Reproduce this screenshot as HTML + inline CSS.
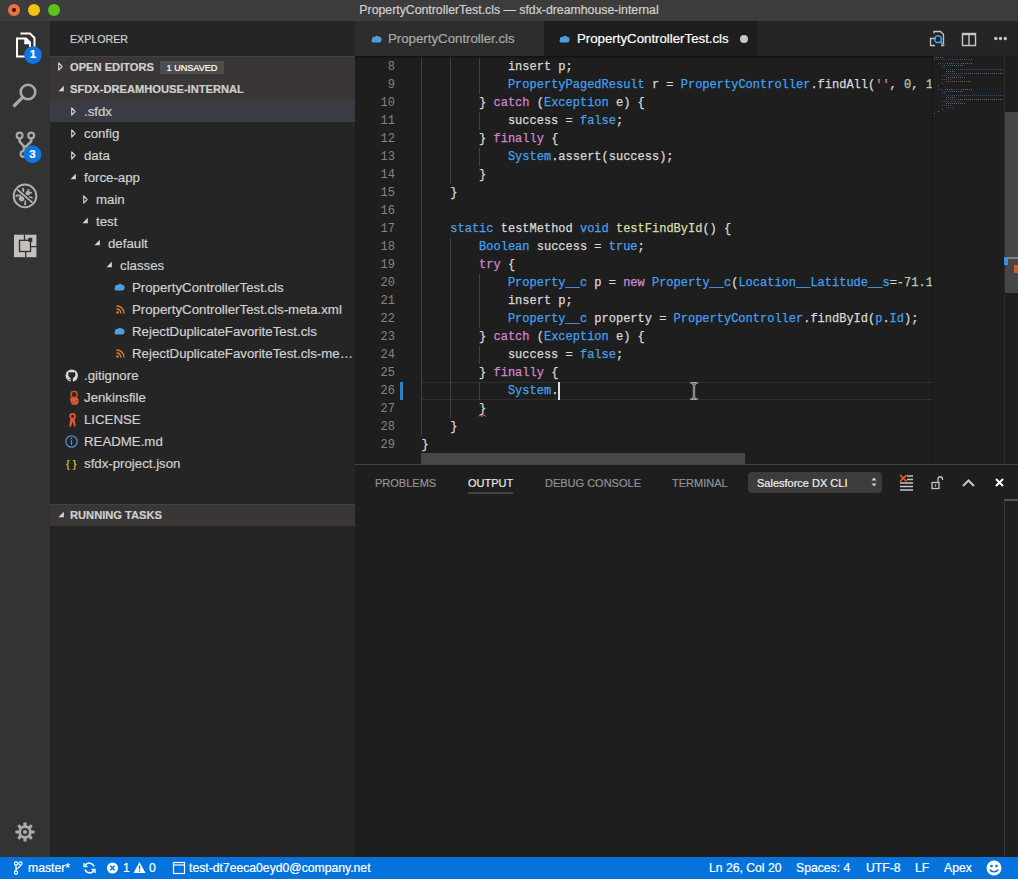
<!DOCTYPE html><html><head><meta charset="utf-8"><style>
*{margin:0;padding:0;box-sizing:border-box}
html,body{width:1018px;height:879px;overflow:hidden;background:#1e1e1e;font-family:"Liberation Sans",sans-serif}
div,svg{position:absolute}
.t{white-space:nowrap;-webkit-text-stroke:0.2px currentColor}
.code{font-family:"Liberation Mono",monospace;font-size:12px;line-height:18px;white-space:pre;color:#d8d8d8;height:18px}
.ln{font-family:"Liberation Mono",monospace;font-size:12px;line-height:18px;color:#858585;text-align:right;width:40px;height:18px}
.code{-webkit-text-stroke:0.25px currentColor}
.k{color:#4f9ee8}.c{color:#42a0f2}.p{color:#d086d0}.f{color:#dcdcaa}.s{color:#ce9178}.n{color:#b5cea8}
.row{left:0;width:305px;height:22px;line-height:24px;font-size:13.25px;color:#d0d0d0;white-space:nowrap}
.row .t{position:absolute;top:0}
.sec{left:0;width:305px;height:22px;line-height:23px;font-size:11.15px;font-weight:bold;color:#d0d0d0;background:#3a3636;white-space:nowrap}
.sec .t{position:absolute;top:0;left:20px}
</style></head><body>
<div style="left:0;top:0;width:1018px;height:21px;background:#3c3c3c"></div>
<div style="left:8px;top:4px;width:12px;height:12px;border-radius:50%;background:#e9733f"></div>
<div style="left:28px;top:4px;width:12px;height:12px;border-radius:50%;background:#f3c414"></div>
<div style="left:48px;top:4px;width:12px;height:12px;border-radius:50%;background:#5cc418"></div>
<div style="left:12px;top:8px;width:4px;height:4px;border-radius:50%;background:#3a0f0a"></div>
<div class="t" style="left:0;top:0;width:1018px;height:21px;line-height:21px;text-align:center;font-size:12.3px;color:#d0d0d0">PropertyControllerTest.cls — sfdx-dreamhouse-internal</div>
<div style="left:0;top:21px;width:50px;height:836px;background:#333333"></div>

<svg style="left:0;top:21px" width="50" height="260" viewBox="0 0 50 260">
 <!-- files icon -->
 <path d="M20.5 12.5 H30 L34.5 17 V29" fill="none" stroke="#ffffff" stroke-width="2"/>
 <path d="M17 17.5 H26 L30 21.5 V35.5 H17 Z" fill="none" stroke="#ffffff" stroke-width="2"/>
 <path d="M25 17.5 V22.5 H30" fill="#ffffff" stroke="#ffffff" stroke-width="1.5"/>
 <circle cx="33" cy="34" r="8.9" fill="#0d76e0"/>
 <!-- search -->
 <circle cx="28" cy="71" r="7.3" fill="none" stroke="#a8a8a8" stroke-width="2.6"/>
 <path d="M22.5 76.5 L14.5 84.5" stroke="#a8a8a8" stroke-width="3.2" stroke-linecap="round"/>
 <!-- git -->
 <circle cx="19.6" cy="114.5" r="2.9" fill="none" stroke="#a8a8a8" stroke-width="2.2"/>
 <circle cx="31.2" cy="114.5" r="2.9" fill="none" stroke="#a8a8a8" stroke-width="2.2"/>
 <circle cx="23.5" cy="133" r="2.9" fill="none" stroke="#a8a8a8" stroke-width="2.2"/>
 <path d="M19.6 117.5 V120.5 L24 125.5 V130 M31.2 117.5 V120.5 L25 126.5" fill="none" stroke="#a8a8a8" stroke-width="2.6"/>
 <circle cx="32.5" cy="133.2" r="8.9" fill="#0d76e0"/>
 <!-- debug -->
 <circle cx="25" cy="174.9" r="11.3" fill="none" stroke="#b4b0ac" stroke-width="2"/>
 <circle cx="21.6" cy="177.6" r="2.8" fill="#b4b0ac"/>
 <circle cx="27.8" cy="172.3" r="2.3" fill="#b4b0ac"/>
 <path d="M23.3 167.3 V171.5 M22.1 167.6 H23.3 M28.9 168.2 L27.3 171.6 M27.5 171.6 H31.9 M29 175.8 L32.7 177 M16.3 174.4 H21 M16.3 174.4 V176 M25.3 179.4 V183.3 H24" stroke="#b4b0ac" stroke-width="1.6" fill="none"/>
 <path d="M17.1 168.2 L32.4 181.6" stroke="#333333" stroke-width="3.6"/>
 <path d="M17.1 168.2 L32.4 181.6" stroke="#b4b0ac" stroke-width="1.8"/>
 <!-- extensions -->
 <rect x="14" y="213.7" width="22.4" height="22.5" fill="#c4c0bc"/>
 <path d="M24.5 213.7 V219.3 M30.5 225.6 H36.4 M25.7 230.5 V236.2" stroke="#333333" stroke-width="1.3"/>
 <rect x="19.5" y="219.3" width="11" height="11.2" fill="#c4c0bc" stroke="#2e2e2e" stroke-width="1.3"/>
 <rect x="28.3" y="216.8" width="4" height="4" fill="#2e2e2e"/>
</svg>
<div class="t" style="left:28px;top:47px;width:10px;text-align:center;font-size:11.5px;font-weight:bold;line-height:14px;color:#fff">1</div>
<div class="t" style="left:27.5px;top:147px;width:10px;text-align:center;font-size:11.5px;font-weight:bold;line-height:14px;color:#fff">3</div>
<svg style="left:14px;top:821px" width="22" height="22" viewBox="0 0 22 22"><g transform="translate(11 11)"><rect x="-1.6" y="-9.6" width="3.2" height="4.5" rx="0.8" fill="#aaaaaa" transform="rotate(0)"/><rect x="-1.6" y="-9.6" width="3.2" height="4.5" rx="0.8" fill="#aaaaaa" transform="rotate(45)"/><rect x="-1.6" y="-9.6" width="3.2" height="4.5" rx="0.8" fill="#aaaaaa" transform="rotate(90)"/><rect x="-1.6" y="-9.6" width="3.2" height="4.5" rx="0.8" fill="#aaaaaa" transform="rotate(135)"/><rect x="-1.6" y="-9.6" width="3.2" height="4.5" rx="0.8" fill="#aaaaaa" transform="rotate(180)"/><rect x="-1.6" y="-9.6" width="3.2" height="4.5" rx="0.8" fill="#aaaaaa" transform="rotate(225)"/><rect x="-1.6" y="-9.6" width="3.2" height="4.5" rx="0.8" fill="#aaaaaa" transform="rotate(270)"/><rect x="-1.6" y="-9.6" width="3.2" height="4.5" rx="0.8" fill="#aaaaaa" transform="rotate(315)"/><circle r="6.8" fill="#aaaaaa"/><circle r="3" fill="none" stroke="#333333" stroke-width="1.8"/></g></svg>
<div style="left:50px;top:21px;width:305px;height:836px;background:#252526;overflow:hidden">
<div class="t" style="left:20px;top:0;height:35px;line-height:36px;font-size:10.65px;color:#d0d0d0">EXPLORER</div>
<div class="sec" style="top:35px"><span class="t">OPEN EDITORS</span>
<svg style="left:7.7px;top:6px" width="6" height="9" viewBox="0 0 6 9"><path d="M0.7 0.9 L4.1 4.5 L0.7 8.1 Z" fill="none" stroke="#d8d8d8" stroke-width="1.1" stroke-linejoin="round"/></svg>
</div>
<div style="left:0;top:35px;width:305px;height:1px;background:#434141"></div>
<div style="left:110px;top:40px;width:64px;height:13px;background:#4d4d4d"></div>
<div class="t" style="left:110px;top:40px;width:64px;height:13px;line-height:14px;text-align:center;font-size:9.1px;color:#ffffff">1 UNSAVED</div>
<div class="sec" style="top:57px"><span class="t">SFDX-DREAMHOUSE-INTERNAL</span>
<svg style="left:7.7px;top:7px" width="7" height="7" viewBox="0 0 7 7"><path d="M0.5 6.2 L5.8 6.2 L5.8 0.8 Z" fill="#d8d8d8"/></svg>
</div>
<div class="row" style="top:79px;background:#393c44;"><span class="t" style="left:34px">.sfdx</span>
<svg style="left:21px;top:7px" width="6" height="9" viewBox="0 0 6 9"><path d="M0.7 0.9 L4.1 4.5 L0.7 8.1 Z" fill="none" stroke="#d8d8d8" stroke-width="1.1" stroke-linejoin="round"/></svg>
</div>
<div class="row" style="top:101px;"><span class="t" style="left:34px">config</span>
<svg style="left:21px;top:7px" width="6" height="9" viewBox="0 0 6 9"><path d="M0.7 0.9 L4.1 4.5 L0.7 8.1 Z" fill="none" stroke="#d8d8d8" stroke-width="1.1" stroke-linejoin="round"/></svg>
</div>
<div class="row" style="top:123px;"><span class="t" style="left:34px">data</span>
<svg style="left:21px;top:7px" width="6" height="9" viewBox="0 0 6 9"><path d="M0.7 0.9 L4.1 4.5 L0.7 8.1 Z" fill="none" stroke="#d8d8d8" stroke-width="1.1" stroke-linejoin="round"/></svg>
</div>
<div class="row" style="top:145px;"><span class="t" style="left:34px">force-app</span>
<svg style="left:20px;top:7px" width="7" height="7" viewBox="0 0 7 7"><path d="M0.5 6.2 L5.8 6.2 L5.8 0.8 Z" fill="#d8d8d8"/></svg>
</div>
<div class="row" style="top:167px;"><span class="t" style="left:46px">main</span>
<svg style="left:33px;top:7px" width="6" height="9" viewBox="0 0 6 9"><path d="M0.7 0.9 L4.1 4.5 L0.7 8.1 Z" fill="none" stroke="#d8d8d8" stroke-width="1.1" stroke-linejoin="round"/></svg>
</div>
<div class="row" style="top:189px;"><span class="t" style="left:46px">test</span>
<svg style="left:32px;top:7px" width="7" height="7" viewBox="0 0 7 7"><path d="M0.5 6.2 L5.8 6.2 L5.8 0.8 Z" fill="#d8d8d8"/></svg>
</div>
<div class="row" style="top:211px;"><span class="t" style="left:58px">default</span>
<svg style="left:44px;top:7px" width="7" height="7" viewBox="0 0 7 7"><path d="M0.5 6.2 L5.8 6.2 L5.8 0.8 Z" fill="#d8d8d8"/></svg>
</div>
<div class="row" style="top:233px;"><span class="t" style="left:70px">classes</span>
<svg style="left:56px;top:7px" width="7" height="7" viewBox="0 0 7 7"><path d="M0.5 6.2 L5.8 6.2 L5.8 0.8 Z" fill="#d8d8d8"/></svg>
</div>
<div class="row" style="top:255px;"><span class="t" style="left:82px">PropertyControllerTest.cls</span>
<svg style="left:64px;top:7px" width="11" height="8" viewBox="0 0 11 8"><path d="M2.5 7.5 C0.5 7.5 0 5.5 1 4.5 C0.8 2.5 2.6 1.3 4 2 C4.8 0.5 7.2 0.3 8 1.8 C9.8 1.8 11 3.5 10.5 5.2 C10.3 6.8 9 7.6 7.8 7.5 Z" fill="#4a9fe0"/></svg>
</div>
<div class="row" style="top:277px;"><span class="t" style="left:82px">PropertyControllerTest.cls-meta.xml</span>
<svg style="left:66px;top:7px" width="9" height="9" viewBox="0 0 9 9"><circle cx="1.5" cy="7.5" r="1.3" fill="#e37933"/><path d="M0.5 4 A4 4 0 0 1 4.8 8.5 M0.5 1 A7.2 7.2 0 0 1 8 8.5" fill="none" stroke="#e37933" stroke-width="1.4"/></svg>
</div>
<div class="row" style="top:299px;"><span class="t" style="left:82px">RejectDuplicateFavoriteTest.cls</span>
<svg style="left:64px;top:7px" width="11" height="8" viewBox="0 0 11 8"><path d="M2.5 7.5 C0.5 7.5 0 5.5 1 4.5 C0.8 2.5 2.6 1.3 4 2 C4.8 0.5 7.2 0.3 8 1.8 C9.8 1.8 11 3.5 10.5 5.2 C10.3 6.8 9 7.6 7.8 7.5 Z" fill="#4a9fe0"/></svg>
</div>
<div class="row" style="top:321px;"><span class="t" style="left:82px">RejectDuplicateFavoriteTest.cls-me…</span>
<svg style="left:66px;top:7px" width="9" height="9" viewBox="0 0 9 9"><circle cx="1.5" cy="7.5" r="1.3" fill="#e37933"/><path d="M0.5 4 A4 4 0 0 1 4.8 8.5 M0.5 1 A7.2 7.2 0 0 1 8 8.5" fill="none" stroke="#e37933" stroke-width="1.4"/></svg>
</div>
<div class="row" style="top:343px;"><span class="t" style="left:34px">.gitignore</span>
<svg style="left:15px;top:5px" width="14" height="14" viewBox="0 0 14 14"><circle cx="6.8" cy="6.6" r="6.2" fill="#dadada"/><path d="M3.4 4.3 L3.5 2.9 L5 3.5 C6 3.2 7.5 3.2 8.5 3.5 L10 2.9 L10.1 4.3 C10.5 5.1 10.5 6.1 10.1 7.1 C9.6 8.3 8.7 8.8 7.9 9 V13 H5.7 V9 C4.9 8.8 4 8.3 3.5 7.1 C3.1 6.1 3.1 5.1 3.4 4.3 Z" fill="#252526"/><path d="M3 9.6 C4 10.8 4.6 10.9 5.7 10.6" stroke="#252526" stroke-width="0.8" fill="none"/></svg>
</div>
<div class="row" style="top:365px;"><span class="t" style="left:34px">Jenkinsfile</span>
<svg style="left:18px;top:4px" width="12" height="16" viewBox="0 0 12 16"><rect x="3.3" y="1.6" width="5.6" height="6" rx="2" fill="none" stroke="#d8502c" stroke-width="1.5"/><path d="M2.2 8 C4 7.2 8 7.2 10 8.2 C11 9.5 10.8 12.5 9.8 14 C8.8 15 5 15.2 3.8 14.3 C2.8 13 2 10 2.2 8 Z" fill="#e0562f"/><path d="M5 11.5 L6 13 M8 10 L9 11.5" stroke="#7a2a18" stroke-width="0.9"/></svg>
</div>
<div class="row" style="top:387px;"><span class="t" style="left:34px">LICENSE</span>
<svg style="left:18px;top:4px" width="10" height="17" viewBox="0 0 10 17"><circle cx="4.6" cy="4.3" r="2.4" fill="none" stroke="#e0562f" stroke-width="1.8"/><path d="M2.4 6.8 L1 14.2 L2.9 14.8 L4.6 9.5 L6.1 14.8 L7.8 14.2 L6.6 6.8 Z" fill="#e0562f"/></svg>
</div>
<div class="row" style="top:409px;"><span class="t" style="left:34px">README.md</span>
<svg style="left:15px;top:5px" width="13" height="13" viewBox="0 0 13 13"><circle cx="6.5" cy="6.5" r="5.7" fill="none" stroke="#4a94d0" stroke-width="1.2"/><rect x="5.9" y="5.2" width="1.2" height="4.8" fill="#4a94d0"/><circle cx="6.5" cy="3.4" r="0.8" fill="#4a94d0"/></svg>
</div>
<div class="row" style="top:431px;"><span class="t" style="left:34px">sfdx-project.json</span>
<div class="t" style="left:16px;top:5px;font-size:11px;line-height:14px;color:#d7c630;letter-spacing:0px">{ }</div>
</div>
<div class="sec" style="top:483px"><span class="t">RUNNING TASKS</span>
<svg style="left:7.7px;top:7px" width="7" height="7" viewBox="0 0 7 7"><path d="M0.5 6.2 L5.8 6.2 L5.8 0.8 Z" fill="#d8d8d8"/></svg>
</div>
<div style="left:0;top:483px;width:305px;height:1px;background:#434141"></div>
</div>
<div style="left:355px;top:21px;width:663px;height:35px;background:#252526"></div>
<div style="left:355px;top:21px;width:189px;height:35px;background:#2d2d2d"></div>
<div style="left:544px;top:21px;width:214px;height:35px;background:#1e1e1e"></div>
<svg style="position:absolute;left:370.5px;top:34.5px" width="11" height="8" viewBox="0 0 11 8"><path d="M2.5 7.5 C0.5 7.5 0 5.5 1 4.5 C0.8 2.5 2.6 1.3 4 2 C4.8 0.5 7.2 0.3 8 1.8 C9.8 1.8 11 3.5 10.5 5.2 C10.3 6.8 9 7.6 7.8 7.5 Z" fill="#4a9fe0"/></svg>
<svg style="left:559px;top:34.5px" width="11" height="8" viewBox="0 0 11 8"><path d="M2.5 7.5 C0.5 7.5 0 5.5 1 4.5 C0.8 2.5 2.6 1.3 4 2 C4.8 0.5 7.2 0.3 8 1.8 C9.8 1.8 11 3.5 10.5 5.2 C10.3 6.8 9 7.6 7.8 7.5 Z" fill="#4a9fe0"/></svg>
<div class="t" style="left:388px;top:21px;height:35px;line-height:36px;font-size:13.25px;color:#a9a9a9">PropertyController.cls</div>
<div class="t" style="left:577px;top:21px;height:35px;line-height:36px;font-size:13.25px;color:#ffffff">PropertyControllerTest.cls</div>
<div style="left:740px;top:35px;width:8px;height:8px;border-radius:50%;background:#c8c8c8"></div>
<svg style="left:925px;top:28px" width="90" height="22" viewBox="0 0 90 22">
 <path d="M9 5.5 V3.5 H15.5 L18.5 6.5 V17.5 H16" fill="none" stroke="#c5c5c5" stroke-width="1.3"/>
 <path d="M11 10.5 H5.5 V17.5 H10" fill="none" stroke="#c5c5c5" stroke-width="1.3"/>
 <circle cx="13" cy="11.2" r="3.4" fill="none" stroke="#4aa3f0" stroke-width="1.5"/>
 <path d="M15.5 13.7 L19 17.3" stroke="#4aa3f0" stroke-width="1.8"/>
 <rect x="37.5" y="5.5" width="13" height="12" fill="none" stroke="#c5c5c5" stroke-width="1.4"/>
 <rect x="37" y="5" width="14" height="2.2" fill="#c5c5c5"/>
 <path d="M44 6 V17.5" stroke="#c5c5c5" stroke-width="1.4"/>
 <circle cx="70.8" cy="10.5" r="1.7" fill="#c5c5c5"/><circle cx="75.5" cy="10.5" r="1.7" fill="#c5c5c5"/><circle cx="80.3" cy="10.5" r="1.7" fill="#c5c5c5"/>
</svg>
<div style="left:355px;top:56px;width:663px;height:409px;background:#1e1e1e;overflow:hidden">
<div style="left:66.5px;top:325.5px;width:512px;height:18px;border-top:1px solid #303030;border-bottom:1px solid #303030"></div>
<div style="left:66.0px;top:0px;width:1px;height:380px;background:#404040"></div>
<div style="left:94.8px;top:0px;width:1px;height:128px;background:#404040"></div>
<div style="left:123.6px;top:0px;width:1px;height:38px;background:#404040"></div>
<div style="left:123.6px;top:56px;width:1px;height:18px;background:#404040"></div>
<div style="left:123.6px;top:92px;width:1px;height:18px;background:#404040"></div>
<div style="left:94.8px;top:182px;width:1px;height:180px;background:#404040"></div>
<div style="left:123.6px;top:218px;width:1px;height:54px;background:#404040"></div>
<div style="left:123.6px;top:290px;width:1px;height:18px;background:#404040"></div>
<div style="left:123.6px;top:326px;width:1px;height:18px;background:#404040"></div>
<div class="ln" style="left:0;top:2px;width:40px">8</div>
<div class="code" style="left:66.5px;top:2px">            insert p;</div>
<div class="ln" style="left:0;top:20px;width:40px">9</div>
<div class="code" style="left:66.5px;top:20px">            <span class="c">PropertyPagedResult</span> r = <span class="c">PropertyController</span>.findAll(<span class="s">''</span>, <span class="n">0</span>, <span class="n">1</span></div>
<div class="ln" style="left:0;top:38px;width:40px">10</div>
<div class="code" style="left:66.5px;top:38px">        } <span class="p">catch</span> (<span class="c">Exception</span> e) {</div>
<div class="ln" style="left:0;top:56px;width:40px">11</div>
<div class="code" style="left:66.5px;top:56px">            success = <span class="k">false</span>;</div>
<div class="ln" style="left:0;top:74px;width:40px">12</div>
<div class="code" style="left:66.5px;top:74px">        } <span class="p">finally</span> {</div>
<div class="ln" style="left:0;top:92px;width:40px">13</div>
<div class="code" style="left:66.5px;top:92px">            <span class="c">System</span>.assert(success);</div>
<div class="ln" style="left:0;top:110px;width:40px">14</div>
<div class="code" style="left:66.5px;top:110px">        }</div>
<div class="ln" style="left:0;top:128px;width:40px">15</div>
<div class="code" style="left:66.5px;top:128px">    }</div>
<div class="ln" style="left:0;top:146px;width:40px">16</div>
<div class="code" style="left:66.5px;top:146px"></div>
<div class="ln" style="left:0;top:164px;width:40px">17</div>
<div class="code" style="left:66.5px;top:164px">    <span class="k">static</span> testMethod <span class="k">void</span> <span class="f">testFindById</span>() {</div>
<div class="ln" style="left:0;top:182px;width:40px">18</div>
<div class="code" style="left:66.5px;top:182px">        <span class="c">Boolean</span> success = <span class="k">true</span>;</div>
<div class="ln" style="left:0;top:200px;width:40px">19</div>
<div class="code" style="left:66.5px;top:200px">        <span class="p">try</span> {</div>
<div class="ln" style="left:0;top:218px;width:40px">20</div>
<div class="code" style="left:66.5px;top:218px">            <span class="c">Property__c</span> p = <span class="p">new</span> <span class="c">Property__c</span>(<span class="c">Location__Latitude__s</span>=<span class="n">-71.1</span></div>
<div class="ln" style="left:0;top:236px;width:40px">21</div>
<div class="code" style="left:66.5px;top:236px">            insert p;</div>
<div class="ln" style="left:0;top:254px;width:40px">22</div>
<div class="code" style="left:66.5px;top:254px">            <span class="c">Property__c</span> property = <span class="c">PropertyController</span>.findById(<span class="c">p</span>.<span class="c">Id</span>);</div>
<div class="ln" style="left:0;top:272px;width:40px">23</div>
<div class="code" style="left:66.5px;top:272px">        } <span class="p">catch</span> (<span class="c">Exception</span> e) {</div>
<div class="ln" style="left:0;top:290px;width:40px">24</div>
<div class="code" style="left:66.5px;top:290px">            success = <span class="k">false</span>;</div>
<div class="ln" style="left:0;top:308px;width:40px">25</div>
<div class="code" style="left:66.5px;top:308px">        } <span class="p">finally</span> {</div>
<div class="ln" style="left:0;top:326px;width:40px">26</div>
<div class="code" style="left:66.5px;top:326px">            <span class="c">System</span>.</div>
<div class="ln" style="left:0;top:344px;width:40px">27</div>
<div class="code" style="left:66.5px;top:344px">        }</div>
<div class="ln" style="left:0;top:362px;width:40px">28</div>
<div class="code" style="left:66.5px;top:362px">    }</div>
<div class="ln" style="left:0;top:380px;width:40px">29</div>
<div class="code" style="left:66.5px;top:380px">}</div>
<div style="left:45px;top:326px;width:3px;height:18px;background:#2d7fc2"></div>
<div style="left:202.8px;top:326px;width:2px;height:18px;background:#e0e0e0"></div>
<svg style="left:123.1px;top:358px" width="9" height="4" viewBox="0 0 9 4"><path d="M0 2.5 L2 1 L4 2.5 L6 1 L8 2.5" fill="none" stroke="#e05252" stroke-width="1"/></svg>
<svg style="left:334px;top:325px" width="10" height="20" viewBox="0 0 10 20"><path d="M1.5 2 H3.5 L5 3.5 L6.5 2 H8.5 M5 3.5 V16.5 M1.5 18 H3.5 L5 16.5 L6.5 18 H8.5" fill="none" stroke="#ffffff" stroke-width="2.2"/><path d="M1.5 2 H3.5 L5 3.5 L6.5 2 H8.5 M5 3.5 V16.5 M1.5 18 H3.5 L5 16.5 L6.5 18 H8.5" fill="none" stroke="#111" stroke-width="1"/></svg>
<div style="left:577px;top:0;width:1px;height:409px;background:#161616"></div>
<div style="left:649px;top:56px;width:14px;height:181px;background:#464646"></div>
<div style="left:649px;top:0;width:1px;height:409px;background:#2a2a2a"></div>
<div style="left:649px;top:201px;width:4px;height:8px;background:#3b8eea"></div>
<div style="left:653px;top:201px;width:10px;height:2px;background:#808080"></div>
<div style="left:659px;top:209px;width:4px;height:8px;background:#d35a2a"></div>
<div style="left:66px;top:397px;width:324px;height:11px;background:#474747"></div>
<div style="left:0;top:0;width:577px;height:3px;background:linear-gradient(#111111,rgba(30,30,30,0))"></div>
</div>
<div style="left:934px;top:57px;width:9px;height:1px;background:repeating-linear-gradient(90deg,#d4d4d4 0 1px,transparent 1px 2px);opacity:.38"></div>
<div style="left:934px;top:59px;width:6px;height:1px;background:repeating-linear-gradient(90deg,#569cd6 0 1px,transparent 1px 2px);opacity:.38"></div>
<div style="left:941px;top:59px;width:6px;height:1px;background:repeating-linear-gradient(90deg,#569cd6 0 1px,transparent 1px 2px);opacity:.38"></div>
<div style="left:948px;top:59px;width:22px;height:1px;background:repeating-linear-gradient(90deg,#4e9ee0 0 1px,transparent 1px 2px);opacity:.38"></div>
<div style="left:971px;top:59px;width:2px;height:1px;background:repeating-linear-gradient(90deg,#d4d4d4 0 1px,transparent 1px 2px);opacity:.38"></div>
<div style="left:938px;top:63px;width:6px;height:1px;background:repeating-linear-gradient(90deg,#569cd6 0 1px,transparent 1px 2px);opacity:.38"></div>
<div style="left:945px;top:63px;width:10px;height:1px;background:repeating-linear-gradient(90deg,#d4d4d4 0 1px,transparent 1px 2px);opacity:.38"></div>
<div style="left:956px;top:63px;width:4px;height:1px;background:repeating-linear-gradient(90deg,#569cd6 0 1px,transparent 1px 2px);opacity:.38"></div>
<div style="left:961px;top:63px;width:12px;height:1px;background:repeating-linear-gradient(90deg,#dcdcaa 0 1px,transparent 1px 2px);opacity:.38"></div>
<div style="left:942px;top:65px;width:7px;height:1px;background:repeating-linear-gradient(90deg,#4e9ee0 0 1px,transparent 1px 2px);opacity:.38"></div>
<div style="left:950px;top:65px;width:14px;height:1px;background:repeating-linear-gradient(90deg,#d4d4d4 0 1px,transparent 1px 2px);opacity:.38"></div>
<div style="left:942px;top:67px;width:3px;height:1px;background:repeating-linear-gradient(90deg,#c586c0 0 1px,transparent 1px 2px);opacity:.38"></div>
<div style="left:946px;top:69px;width:11px;height:1px;background:repeating-linear-gradient(90deg,#4e9ee0 0 1px,transparent 1px 2px);opacity:.38"></div>
<div style="left:958px;top:69px;width:9px;height:1px;background:repeating-linear-gradient(90deg,#c586c0 0 1px,transparent 1px 2px);opacity:.38"></div>
<div style="left:968px;top:69px;width:36px;height:1px;background:repeating-linear-gradient(90deg,#4e9ee0 0 1px,transparent 1px 2px);opacity:.38"></div>
<div style="left:946px;top:71px;width:9px;height:1px;background:repeating-linear-gradient(90deg,#d4d4d4 0 1px,transparent 1px 2px);opacity:.38"></div>
<div style="left:946px;top:73px;width:19px;height:1px;background:repeating-linear-gradient(90deg,#4e9ee0 0 1px,transparent 1px 2px);opacity:.38"></div>
<div style="left:966px;top:73px;width:38px;height:1px;background:repeating-linear-gradient(90deg,#d4d4d4 0 1px,transparent 1px 2px);opacity:.38"></div>
<div style="left:942px;top:75px;width:8px;height:1px;background:repeating-linear-gradient(90deg,#c586c0 0 1px,transparent 1px 2px);opacity:.38"></div>
<div style="left:951px;top:75px;width:12px;height:1px;background:repeating-linear-gradient(90deg,#4e9ee0 0 1px,transparent 1px 2px);opacity:.38"></div>
<div style="left:946px;top:77px;width:20px;height:1px;background:repeating-linear-gradient(90deg,#d4d4d4 0 1px,transparent 1px 2px);opacity:.38"></div>
<div style="left:942px;top:79px;width:10px;height:1px;background:repeating-linear-gradient(90deg,#c586c0 0 1px,transparent 1px 2px);opacity:.38"></div>
<div style="left:946px;top:81px;width:25px;height:1px;background:repeating-linear-gradient(90deg,#d4d4d4 0 1px,transparent 1px 2px);opacity:.38"></div>
<div style="left:942px;top:83px;width:1px;height:1px;background:repeating-linear-gradient(90deg,#d4d4d4 0 1px,transparent 1px 2px);opacity:.38"></div>
<div style="left:938px;top:85px;width:1px;height:1px;background:repeating-linear-gradient(90deg,#d4d4d4 0 1px,transparent 1px 2px);opacity:.38"></div>
<div style="left:938px;top:89px;width:6px;height:1px;background:repeating-linear-gradient(90deg,#569cd6 0 1px,transparent 1px 2px);opacity:.38"></div>
<div style="left:945px;top:89px;width:10px;height:1px;background:repeating-linear-gradient(90deg,#d4d4d4 0 1px,transparent 1px 2px);opacity:.38"></div>
<div style="left:956px;top:89px;width:4px;height:1px;background:repeating-linear-gradient(90deg,#569cd6 0 1px,transparent 1px 2px);opacity:.38"></div>
<div style="left:961px;top:89px;width:12px;height:1px;background:repeating-linear-gradient(90deg,#dcdcaa 0 1px,transparent 1px 2px);opacity:.38"></div>
<div style="left:942px;top:91px;width:7px;height:1px;background:repeating-linear-gradient(90deg,#4e9ee0 0 1px,transparent 1px 2px);opacity:.38"></div>
<div style="left:950px;top:91px;width:14px;height:1px;background:repeating-linear-gradient(90deg,#d4d4d4 0 1px,transparent 1px 2px);opacity:.38"></div>
<div style="left:942px;top:93px;width:3px;height:1px;background:repeating-linear-gradient(90deg,#c586c0 0 1px,transparent 1px 2px);opacity:.38"></div>
<div style="left:946px;top:95px;width:11px;height:1px;background:repeating-linear-gradient(90deg,#4e9ee0 0 1px,transparent 1px 2px);opacity:.38"></div>
<div style="left:958px;top:95px;width:9px;height:1px;background:repeating-linear-gradient(90deg,#c586c0 0 1px,transparent 1px 2px);opacity:.38"></div>
<div style="left:968px;top:95px;width:36px;height:1px;background:repeating-linear-gradient(90deg,#4e9ee0 0 1px,transparent 1px 2px);opacity:.38"></div>
<div style="left:946px;top:97px;width:9px;height:1px;background:repeating-linear-gradient(90deg,#d4d4d4 0 1px,transparent 1px 2px);opacity:.38"></div>
<div style="left:946px;top:99px;width:11px;height:1px;background:repeating-linear-gradient(90deg,#4e9ee0 0 1px,transparent 1px 2px);opacity:.38"></div>
<div style="left:958px;top:99px;width:46px;height:1px;background:repeating-linear-gradient(90deg,#d4d4d4 0 1px,transparent 1px 2px);opacity:.38"></div>
<div style="left:942px;top:101px;width:8px;height:1px;background:repeating-linear-gradient(90deg,#c586c0 0 1px,transparent 1px 2px);opacity:.38"></div>
<div style="left:951px;top:101px;width:12px;height:1px;background:repeating-linear-gradient(90deg,#4e9ee0 0 1px,transparent 1px 2px);opacity:.38"></div>
<div style="left:946px;top:103px;width:20px;height:1px;background:repeating-linear-gradient(90deg,#d4d4d4 0 1px,transparent 1px 2px);opacity:.38"></div>
<div style="left:942px;top:105px;width:10px;height:1px;background:repeating-linear-gradient(90deg,#c586c0 0 1px,transparent 1px 2px);opacity:.38"></div>
<div style="left:946px;top:107px;width:7px;height:1px;background:repeating-linear-gradient(90deg,#4e9ee0 0 1px,transparent 1px 2px);opacity:.38"></div>
<div style="left:942px;top:109px;width:1px;height:1px;background:repeating-linear-gradient(90deg,#d4d4d4 0 1px,transparent 1px 2px);opacity:.38"></div>
<div style="left:938px;top:111px;width:1px;height:1px;background:repeating-linear-gradient(90deg,#d4d4d4 0 1px,transparent 1px 2px);opacity:.38"></div>
<div style="left:934px;top:113px;width:1px;height:1px;background:repeating-linear-gradient(90deg,#d4d4d4 0 1px,transparent 1px 2px);opacity:.38"></div>
<div style="left:355px;top:464px;width:663px;height:393px;background:#1e1e1e;border-top:1px solid #424242"></div>
<div class="t" style="left:375px;top:474px;height:18px;line-height:18px;font-size:11px;color:#929292">PROBLEMS</div>
<div class="t" style="left:468px;top:474px;height:18px;line-height:18px;font-size:11px;color:#e7e7e7">OUTPUT</div>
<div class="t" style="left:545px;top:474px;height:18px;line-height:18px;font-size:11px;color:#929292">DEBUG CONSOLE</div>
<div class="t" style="left:672px;top:474px;height:18px;line-height:18px;font-size:11px;color:#929292">TERMINAL</div>
<div style="left:468px;top:492px;width:45px;height:2px;background:#424242"></div>
<div style="left:748px;top:472px;width:134px;height:21px;background:#3c3c3c;border-radius:4px"></div>
<div class="t" style="left:757px;top:472px;height:21px;line-height:22px;font-size:11px;color:#f0f0f0">Salesforce DX CLI</div>
<svg style="left:871px;top:476px" width="6" height="12" viewBox="0 0 6 12"><path d="M0.5 4.5 L3 1.5 L5.5 4.5 Z M0.5 7.5 L3 10.5 L5.5 7.5 Z" fill="#d0d0d0"/></svg>
<svg style="left:895px;top:472px" width="120" height="22" viewBox="0 0 120 22">
 <path d="M12 4 H18 M12 7.5 H18 M5 11 H18 M5 14.5 H18 M5 18 H18" stroke="#c5c5c5" stroke-width="1.5"/>
 <path d="M5 3 L11.5 9.5 M11.5 3 L5 9.5" stroke="#e8602c" stroke-width="1.6"/>
 <rect x="37" y="10.5" width="7" height="6" fill="none" stroke="#c5c5c5" stroke-width="1.3"/>
 <path d="M43 10.5 V7 C43 4 47.5 4 47.5 7 V8" fill="none" stroke="#c5c5c5" stroke-width="1.3"/>
 <path d="M40.5 12.5 V14.5" stroke="#c5c5c5" stroke-width="1.2"/>
 <path d="M68 14 L73.5 8.5 L79 14" fill="none" stroke="#c5c5c5" stroke-width="2"/>
 <path d="M101 7 L108 14 M108 7 L101 14" stroke="#ffffff" stroke-width="2"/>
</svg>
<div style="left:1004px;top:499px;width:14px;height:358px;background:#1e1e1e;border-left:1px solid #3a3a3a;border-top:2px solid #555555"></div>
<div style="left:0;top:857px;width:1018px;height:22px;background:#0473dd"></div>
<div class="t" style="left:28px;top:857px;height:22px;line-height:22px;font-size:12.2px;color:#ffffff">master*</div>
<div class="t" style="left:123px;top:857px;height:22px;line-height:22px;font-size:12.2px;color:#ffffff">1</div>
<div class="t" style="left:149px;top:857px;height:22px;line-height:22px;font-size:12.2px;color:#ffffff">0</div>
<div class="t" style="left:189px;top:857px;height:22px;line-height:22px;font-size:12.2px;color:#ffffff">test-dt7eeca0eyd0@company.net</div>
<div class="t" style="left:709px;top:857px;height:22px;line-height:22px;font-size:12.2px;color:#ffffff">Ln 26, Col 20</div>
<div class="t" style="left:796px;top:857px;height:22px;line-height:22px;font-size:12.2px;color:#ffffff">Spaces: 4</div>
<div class="t" style="left:866px;top:857px;height:22px;line-height:22px;font-size:12.2px;color:#ffffff">UTF-8</div>
<div class="t" style="left:915px;top:857px;height:22px;line-height:22px;font-size:12.2px;color:#ffffff">LF</div>
<div class="t" style="left:944px;top:857px;height:22px;line-height:22px;font-size:12.2px;color:#ffffff">Apex</div>
<svg style="left:0;top:857px" width="200" height="22" viewBox="0 0 200 22">
 <circle cx="16" cy="6.5" r="1.6" fill="none" stroke="#fff" stroke-width="1.2"/>
 <circle cx="20.5" cy="6.5" r="1.6" fill="none" stroke="#fff" stroke-width="1.2"/>
 <circle cx="16" cy="15.5" r="1.6" fill="none" stroke="#fff" stroke-width="1.2"/>
 <path d="M16 8 V14 M20.5 8 C20.5 11 16 11 16 13" fill="none" stroke="#fff" stroke-width="1.2"/>
 <path d="M94 9.5 A5 5 0 0 0 85 8.5 M85 12.5 A5 5 0 0 0 94 13.5" fill="none" stroke="#fff" stroke-width="1.5"/>
 <path d="M84 6 V9.5 H87.5 M95 16 V12.5 H91.5" fill="none" stroke="#fff" stroke-width="1.3"/>
 <circle cx="112.5" cy="11" r="5.5" fill="#fff"/>
 <path d="M110.3 8.8 L114.7 13.2 M114.7 8.8 L110.3 13.2" stroke="#0473dd" stroke-width="1.6"/>
 <path d="M139.5 5 L145.5 16 H133.5 Z" fill="#fff"/>
 <rect x="138.8" y="8.5" width="1.4" height="4" fill="#0473dd"/><rect x="138.8" y="13.3" width="1.4" height="1.4" fill="#0473dd"/>
 <rect x="173.5" y="5.5" width="11" height="11" fill="none" stroke="#fff" stroke-width="1.2"/>
 <path d="M173.5 8 H184.5" stroke="#fff" stroke-width="1.2"/>
</svg>
<svg style="left:986px;top:860px" width="16" height="16" viewBox="0 0 16 16"><circle cx="8" cy="8" r="7.5" fill="#fff"/><circle cx="5.5" cy="6" r="1.3" fill="#0473dd"/><circle cx="10.5" cy="6" r="1.3" fill="#0473dd"/><path d="M4 9.5 C5 12.5 11 12.5 12 9.5" fill="none" stroke="#0473dd" stroke-width="1.5"/></svg>
</body></html>
